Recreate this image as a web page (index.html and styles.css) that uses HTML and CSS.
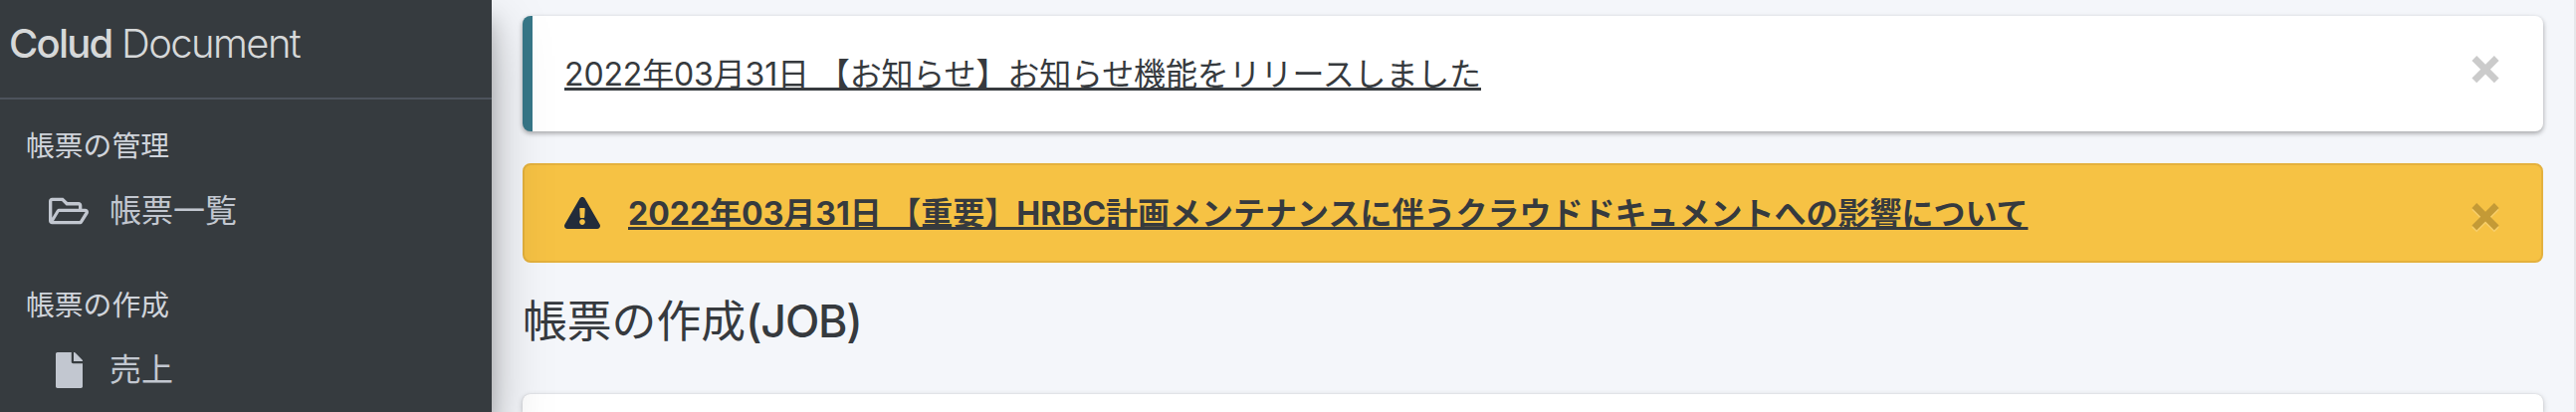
FILE: index.html
```
<!DOCTYPE html>
<html lang="ja">
<head>
<meta charset="utf-8">
<title>Colud Document</title>
<link rel="stylesheet" href="styles.css">
</head>
<body>
<div class="wrapper">
  <aside class="sidebar">
    <a class="brand"><b>Colud</b> Document</a>
    <nav class="nav">
      <div class="nav-header">帳票の管理</div>
      <a class="nav-link">
        <svg class="nav-icon folder" viewBox="0 0 576 512"><path fill="currentColor" d="M527.9 224H480v-48c0-26.500-21.500-48-48-48H272l-64-64H48C21.500 64 0 85.500 0 112v288c0 26.500 21.500 48 48 48h400c16.500 0 31.900-8.500 40.700-22.600l79.900-128c20-31.900-3-73.400-40.700-73.400zM48 118c0-3.300 2.700-6 6-6h134.100l64 64H426c3.300 0 6 2.700 6 6v42H152c-16.800 0-32.400 8.800-41.100 23.200L48 351.400zm400 282H72l77.200-128H528z"/></svg>
        <span>帳票一覧</span>
      </a>
      <div class="nav-header">帳票の作成</div>
      <a class="nav-link">
        <svg class="nav-icon file" viewBox="0 0 384 512"><path fill="currentColor" d="M224 136V0H24C10.700 0 0 10.700 0 24v464c0 13.300 10.700 24 24 24h336c13.300 0 24-10.700 24-24V160H248c-13.200 0-24-10.800-24-24zm160-14.100v6.100H256V0h6.100c6.400 0 12.500 2.500 17 7l97.900 98c4.500 4.500 7 10.600 7 16.900z"/></svg>
        <span>売上</span>
      </a>
    </nav>
  </aside>
  <main class="content">
    <div class="callout">
      <a class="notice">2022年03月31日 【お知らせ】お知らせ機能をリリースしました</a>
      <button class="close">×</button>
    </div>
    <div class="alert">
      <svg class="warn" viewBox="0 0 576 512"><path fill="currentColor" d="M569.500 440C588 472 564.800 512 527.900 512H48.100c-36.900 0-60-40-41.600-72L246.400 24c18.500-32 64.700-32 83.200 0l239.900 416zM288 354c-25.400 0-46 20.600-46 46s20.600 46 46 46 46-20.600 46-46-20.600-46-46-46zm-43.700-165.300 7.400 136c.3 6.400 5.600 11.300 12 11.300h48.500c6.400 0 11.600-5 12-11.300l7.400-136c.4-6.900-5.100-12.700-12-12.700h-63.400c-6.900 0-12.400 5.800-11.900 12.700z"/></svg>
      <a class="notice bold">2022年03月31日 【重要】HRBC計画メンテナンスに伴うクラウドドキュメントへの影響について</a>
      <button class="close">×</button>
    </div>
    <h1 class="title">帳票の作成<span class="latin">(JOB)</span></h1>
    <div class="card"></div>
  </main>
  <div class="edge"></div>
</div>
</body>
</html>
```
FILE: styles.css
```
* { box-sizing: border-box; }
body {
  margin: 0;
  height: 414px;
  overflow: hidden;
  background: #f4f6fa;
  color: #363a3e;
  font-family: Inter, "Noto Sans CJK JP", sans-serif;
  font-size: 32px;
  line-height: 48px;
}
.wrapper { display: flex; height: 414px; overflow: hidden; }
.sidebar {
  position: relative;
  z-index: 2;
  flex: none;
  width: 494px;
  height: 414px;
  background: #363b3f;
  box-shadow: 0 28px 56px rgba(0, 0, 0, .25), 0 20px 20px rgba(0, 0, 0, .22);
}
.brand {
  display: block;
  height: 100px;
  padding: 14px 0 0 9px;
  border-bottom: 2px solid #4d535c;
  color: #d6d8d9;
  font-size: 40px;
  line-height: 60px;
  font-weight: 300;
  letter-spacing: -1.6px;
  white-space: nowrap;
}
.brand b { font-weight: 500; letter-spacing: -1.8px; }
.nav { padding-top: 25px; }
.nav-header {
  height: 44px;
  padding-left: 26px;
  color: #d0d4db;
  font-size: 28.8px;
  line-height: 44px;
}
.nav-link {
  display: flex;
  align-items: center;
  height: 86px;
  padding: 0 0 0 42px;
  margin-bottom: 30px;
  color: #c2c7d0;
}
.nav-link:last-child { margin-bottom: 0; }
.nav-icon { flex: none; display: block; }
.folder { width: 40px; height: 36px; margin: 0 21px 0 7px; }
.file { width: 27px; height: 36px; margin: 0 27px 0 14px; }
.content {
  flex: 1;
  display: flex;
  flex-direction: column;
  padding: 16px 31px 0 31px;
}
.callout {
  flex: none;
  display: flex;
  height: 116px;
  padding: 35px 40px 0 32px;
  border-left: 10px solid #377788;
  border-radius: 8px;
  background: #fff;
  box-shadow: 0 2px 6px rgba(0, 0, 0, .12), 0 2px 4px rgba(0, 0, 0, .24);
}
.notice {
  letter-spacing: -.14px;
  white-space: nowrap;
  text-decoration: underline 3px;
  text-underline-offset: 2px;
  text-decoration-skip-ink: none;
}
.bold { font-weight: 700; letter-spacing: 0; }
.close {
  margin: -9px 0 0 auto;
  padding: 0;
  border: 0;
  background: none;
  color: #000;
  font: 700 53px/48px Inter, sans-serif;
  text-shadow: 0 2px 0 #fff;
  opacity: .2;
  height: 48px;
}
.alert {
  flex: none;
  display: flex;
  height: 100px;
  margin-top: 32px;
  padding: 25px 38px 0 40px;
  border: 2px solid #e4b13d;
  border-radius: 8px;
  background: #f6c244;
}
.alert .close { margin-top: -1px; }
.warn { flex: none; width: 36px; height: 32px; margin: 7px 28px 0 0; color: #222c3a; }
.title {
  flex: none;
  margin: 25px 0 0;
  height: 68px;
  font-size: 44.8px;
  line-height: 68px;
  font-weight: 400;
  white-space: nowrap;
}
.latin { font-weight: 500; letter-spacing: -1.2px; }
.card {
  flex: 1;
  margin-top: 39px;
  border-radius: 8px 8px 0 0;
  background: #fff;
  box-shadow: 0 0 2px rgba(0, 0, 0, .13), 0 2px 6px rgba(0, 0, 0, .2);
}
.edge { flex: none; width: 2px; background: #e6e7ea; }
```
